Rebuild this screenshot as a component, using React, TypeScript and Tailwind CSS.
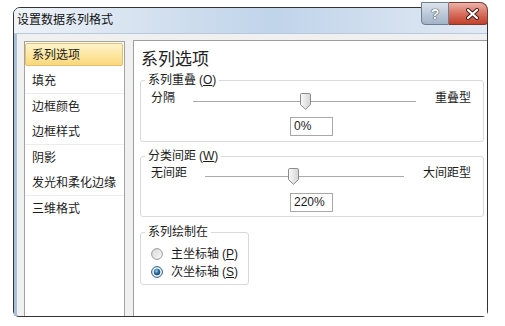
import React from "react"

const listGroups = [
  ["系列选项", "填充"],
  ["边框颜色", "边框样式"],
  ["阴影", "发光和柔化边缘"],
  ["三维格式"],
]

function Thumb() {
  return (
    <svg width="11" height="17" viewBox="0 0 11 17">
      <defs>
        <linearGradient id="thumbFill" x1="0" y1="0" x2="1" y2="0">
          <stop offset="0" stopColor="#fbfbfb" />
          <stop offset="1" stopColor="#d4d4d4" />
        </linearGradient>
      </defs>
      <path
        d="M1.8 0.5 H9.2 Q10.5 0.5 10.5 1.8 V11.6 L5.5 16.3 L0.5 11.6 V1.8 Q0.5 0.5 1.8 0.5 Z"
        fill="url(#thumbFill)"
        stroke="#8c8c8c"
      />
    </svg>
  )
}

function Radio({ checked }: { checked?: boolean }) {
  return (
    <svg width="12" height="12" viewBox="0 0 12 12" className="shrink-0">
      <defs>
        <linearGradient id="radioOff" x1="0" y1="0" x2="1" y2="1">
          <stop offset="0" stopColor="#d6d6d6" />
          <stop offset="1" stopColor="#fbfbfb" />
        </linearGradient>
        <radialGradient id="radioDot" cx="0.4" cy="0.35" r="0.7">
          <stop offset="0" stopColor="#9fd0f2" />
          <stop offset="0.5" stopColor="#2b73ac" />
          <stop offset="1" stopColor="#123f66" />
        </radialGradient>
      </defs>
      <circle cx="6" cy="6" r="5.4" fill={checked ? "#e9eef3" : "url(#radioOff)"} stroke={checked ? "#2c5f86" : "#9a9a9a"} />
      {checked && <circle cx="6" cy="6" r="3.2" fill="url(#radioDot)" />}
    </svg>
  )
}

function SliderRow({ left, right, thumbClass, className }: { left: string; right: string; thumbClass: string; className?: string }) {
  return (
    <div className={"flex items-center h-[18px] pl-[10px] pr-[12px] gap-[18px] " + (className ?? "")}>
      <span className="leading-[18px]">{left}</span>
      <div className="relative flex-1 h-full">
        <div className="absolute left-0 right-0 top-[12px] h-px bg-[#a9a9a9]" />
        <div className={"absolute top-[4px] " + thumbClass}>
          <Thumb />
        </div>
      </div>
      <span className="ml-[1px] leading-[18px]">{right}</span>
    </div>
  )
}

function ValueBox({ value, className }: { value: string; className?: string }) {
  return (
    <div className={"ml-[149px] w-[43px] h-[19px] border border-[#a8a8a8] bg-white pl-[3px] text-[12px] leading-[17px] " + (className ?? "")}>
      {value}
    </div>
  )
}

function Legend({ children }: { children: React.ReactNode }) {
  return <legend className="ml-[4px] px-[3px] text-[12px] leading-[14px]">{children}</legend>
}

// label with access key, e.g. 系列重叠 (O)
function Hotkey({ text, k }: { text: string; k: string }) {
  return (
    <span>
      {text}
      <span className="ml-[3px]">
        (<span className="underline">{k}</span>)
      </span>
    </span>
  )
}

export default function App() {
  return (
    <div className="w-[505px] h-[326px] bg-white pt-[7px] pl-[13px] font-['Liberation_Sans','Noto_Sans_CJK_SC',sans-serif] text-[12px] text-[#1b1b1b]">
      <div className="relative w-[475px] h-[310px] border border-[#333] rounded-t-[7px] rounded-b-[6px] flex flex-col bg-[#f0f0f0]">
        {/* Title bar */}
        <div className="h-[26px] shrink-0 rounded-t-[6px] border-b border-[#b7c9df] bg-[linear-gradient(90deg,#eef3f9_0%,#d3e0ef_30%,#c0d4ea_55%,#d3e0ef_80%,#e2eaf4_100%)] pl-[3px] flex items-center">
          <span className="text-[12px] leading-[14px] text-[#111] -mt-[2px]">设置数据系列格式</span>
        </div>

        {/* Caption buttons */}
        <div className="absolute top-[-6px] left-[407px] flex h-[23px]">
          <div className="w-[28px] h-full border border-[#6e7d90] rounded-bl-[4px] bg-[linear-gradient(180deg,#dce3ec_0%,#bccad9_50%,#a3b4c8_100%)] flex items-center justify-center">
            <span className="text-white font-bold text-[14px] leading-none [text-shadow:0_0_1px_#223,0_0_1px_#223]">?</span>
          </div>
          <div className="w-[39px] h-full border border-l-0 border-[#7a3a30] rounded-br-[4px] rounded-tr-[8px] bg-[linear-gradient(180deg,#eab2a8_0%,#d8705f_50%,#c23f2a_100%)] flex items-center pl-[17px]">
            <svg width="13" height="12" viewBox="0 0 13 12">
              <path d="M2 2 L11 10 M11 2 L2 10" stroke="#3a1a14" strokeWidth="4" strokeLinecap="round" />
              <path d="M2 2 L11 10 M11 2 L2 10" stroke="#ffffff" strokeWidth="2.2" strokeLinecap="round" />
            </svg>
          </div>
        </div>

        {/* Body */}
        <div className="flex-1 flex border-l-[3px] border-[#a9bfd9] pl-[7px] min-h-0">
          {/* Category list */}
          <div className="mt-[7px] w-[101px] shrink-0 border border-[#a3a3a3] border-b-0 bg-white pt-[1px]">
            {listGroups.map((group, gi) => (
              <div key={gi} className={gi < listGroups.length - 1 ? "border-b border-[#ececec]" : ""}>
                {group.map((item) =>
                  item === "系列选项" ? (
                    <div
                      key={item}
                      className="mr-[1px] mb-[2px] h-[23px] rounded-[2px] border border-[#e2c06c] bg-[linear-gradient(180deg,#fef4cb_0%,#fde7a2_50%,#fbd77c_100%)] pl-[6px] flex items-center"
                    >
                      {item}
                    </div>
                  ) : (
                    <div key={item} className="h-[25px] pl-[7px] flex items-center">
                      {item}
                    </div>
                  )
                )}
              </div>
            ))}
          </div>

          {/* Main panel */}
          <div className="ml-[8px] mt-[6px] flex-1 border-l border-t border-[#9e9e9e] bg-white pt-[9px] flex flex-col">
            <div className="pl-[7px] text-[17px] leading-[20px] text-[#222]">系列选项</div>

            <fieldset className="mt-[3px] ml-[6px] mr-[3px] border border-[#d6dadf] rounded-[3px] pb-[5px]">
              <Legend>
                <Hotkey text="系列重叠" k="O" />
              </Legend>
              <SliderRow className="mt-[2px]" left="分隔" right="重叠型" thumbClass="left-[107px]" />
              <ValueBox className="mt-[10px]" value="0%" />
            </fieldset>

            <fieldset className="mt-[7px] ml-[6px] mr-[3px] border border-[#d6dadf] rounded-[3px] pb-[4px]">
              <Legend>
                <Hotkey text="分类间距" k="W" />
              </Legend>
              <SliderRow className="mt-[1px]" left="无间距" right="大间距型" thumbClass="left-[83px]" />
              <ValueBox className="mt-[11px]" value="220%" />
            </fieldset>

            <fieldset className="mt-[8px] ml-[6px] w-[109px] border border-[#d6dadf] rounded-[3px] pb-[3px]">
              <Legend>系列绘制在</Legend>
              <div className="mt-[6px] flex flex-col">
                <div className="h-[18px] pl-[10px] flex items-center gap-[8px]">
                  <Radio />
                  <Hotkey text="主坐标轴" k="P" />
                </div>
                <div className="h-[18px] pl-[10px] flex items-center gap-[8px]">
                  <Radio checked />
                  <Hotkey text="次坐标轴" k="S" />
                </div>
              </div>
            </fieldset>
          </div>
        </div>
      </div>
    </div>
  )
}
